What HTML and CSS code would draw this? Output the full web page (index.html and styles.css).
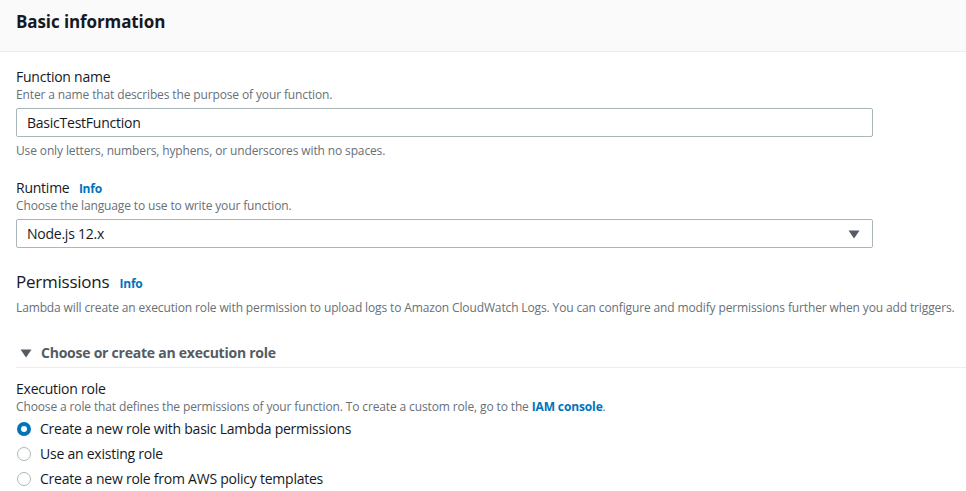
FILE: index.html
```html
<!DOCTYPE html>
<html lang="en">
<head>
    <meta charset="UTF-8">
    <meta name="viewport" content="width=device-width, initial-scale=1.0">
    <title>Create function</title>
    <link rel="stylesheet" href="styles.css">
</head>
<body>
    <!-- Header -->
    <div class="panel-header">
        <h2>Basic information</h2>
    </div>

    <div class="panel-body">
        <!-- Function name -->
        <div class="field">
            <label class="field-label" for="functionName">Function name</label>
            <div class="field-desc">Enter a name that describes the purpose of your function.</div>
            <input class="text-input" type="text" id="functionName" value="BasicTestFunction">
            <div class="field-constraint">Use only letters, numbers, hyphens, or underscores with no spaces.</div>
        </div>

        <!-- Runtime -->
        <div class="field">
            <div class="field-label">Runtime <a class="info" href="#">Info</a></div>
            <div class="field-desc">Choose the language to use to write your function.</div>
            <div class="select">
                <span>Node.js 12.x</span>
                <svg class="caret" width="12" height="10" viewBox="0 0 12 10"><path d="M0.5 1.5h11L6 9.5z" fill="#545b64"/></svg>
            </div>
        </div>

        <!-- Permissions -->
        <h3 class="section-title">Permissions <a class="info" href="#">Info</a></h3>
        <p class="section-desc">Lambda will create an execution role with permission to upload logs to Amazon CloudWatch Logs. You can configure and modify permissions further when you add triggers.</p>

        <div class="expander">
            <svg class="expander-icon" width="12" height="10" viewBox="0 0 12 10"><path d="M0.5 1.5h11L6 9.5z" fill="#545b64"/></svg>
            Choose or create an execution role
        </div>

        <div class="field">
            <div class="field-label">Execution role</div>
            <div class="field-desc">Choose a role that defines the permissions of your function. To create a custom role, go to the <a class="link" href="#">IAM console</a>.</div>
            <div class="radios">
                <label class="radio"><span class="dot checked"></span>Create a new role with basic Lambda permissions</label>
                <label class="radio"><span class="dot"></span>Use an existing role</label>
                <label class="radio"><span class="dot"></span>Create a new role from AWS policy templates</label>
            </div>
        </div>
    </div>
</body>
</html>
```

FILE: styles.css
```css
body {
    margin: 0;
    font-family: "Open Sans", "Noto Sans", Arial, sans-serif;
    letter-spacing: -0.015em;
    color: #16191f;
    background: #fff;
}
.panel-header {
    background: #fafafa;
    border-bottom: 1px solid #eaeded;
    height: 51px;
    padding: 0 16px;
    display: flex;
    align-items: center;
}
.panel-header h2 {
    margin: 0 0 8px;
    font-size: 17px;
    font-weight: 700;
    letter-spacing: -0.1px;
}
.panel-body {
    padding: 15px 0 0 16px;
}
.field {
    margin-bottom: 19px;
}
.field-label {
    display: block;
    font-size: 14px;
    line-height: 20px;
}
.field-desc,
.field-constraint,
.section-desc {
    font-size: 12px;
    line-height: 16px;
    letter-spacing: -0.13px;
    color: #687078;
}
.info {
    font-size: 12px;
    line-height: 1;
    font-weight: 700;
    color: #0073bb;
    text-decoration: none;
    margin-left: 6px;
}
.link {
    font-weight: 700;
    color: #0073bb;
    text-decoration: none;
}
.text-input,
.select {
    box-sizing: border-box;
    width: 857px;
    height: 29px;
    margin-top: 5px;
    border: 1px solid #aab7b8;
    border-radius: 2px;
    padding: 0 10px;
    font-family: inherit;
    font-size: 14px;
    letter-spacing: inherit;
    color: #16191f;
}
.select {
    display: flex;
    align-items: center;
    justify-content: space-between;
    padding-right: 12px;
}
.field-constraint {
    margin-top: 6px;
}
.section-title {
    margin: 22px 0 0;
    font-size: 17px;
    font-weight: 400;
    line-height: 24px;
}
.section-desc {
    margin: 6px 0 0;
}
.expander {
    margin-top: 27px;
    padding: 0 0 4px 4px;
    border-bottom: 1px solid #eaeded;
    font-size: 14px;
    font-weight: 700;
    color: #545b64;
    line-height: 20px;
    display: flex;
    align-items: center;
}
.expander-icon {
    margin-right: 9px;
}
.expander + .field {
    margin-top: 11px;
}
.radios {
    margin-top: 1px;
}
.radio {
    display: flex;
    align-items: center;
    font-size: 14px;
    line-height: 25px;
}
.dot {
    box-sizing: border-box;
    width: 14px;
    height: 14px;
    border-radius: 50%;
    border: 1px solid #aab7b8;
    margin: 0 9px 0 1px;
    background: #fff;
}
.dot.checked {
    border: 4px solid #0073bb;
}
```
